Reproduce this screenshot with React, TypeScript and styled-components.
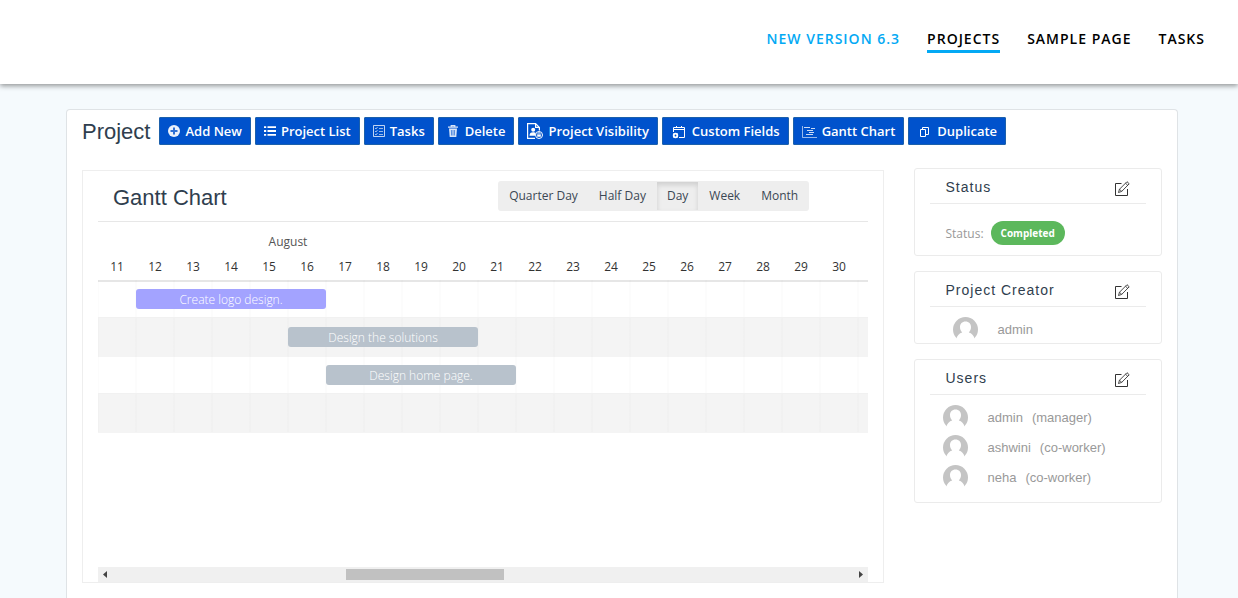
import React from 'react';
import styled, { createGlobalStyle, css } from 'styled-components';

const sans = `"Open Sans", "Noto Sans", sans-serif`;
const arial = `"Liberation Sans", Arial, sans-serif`;
const DAY_WIDTH = 38;

const GlobalStyle = createGlobalStyle`
  *, *::before, *::after { box-sizing: border-box; }
  body { margin: 0; background: #f5fafd; font-family: ${sans}; color: #2f3e4e; }
  h1, h2, h3, ul { margin: 0; padding: 0; font-weight: 400; }
  ul { list-style: none; }
  button { margin: 0; font-family: inherit; cursor: pointer; }
  svg { display: block; flex: none; }
`;

const Page = styled.div`
  display: flex;
  flex-direction: column;
  min-height: 100vh;
`;

const Header = styled.header`
  display: flex;
  justify-content: flex-end;
  align-items: center;
  height: 84px;
  padding: 0 33px 10px;
  background: #fff;
  box-shadow: 0 2px 5px rgba(0, 0, 0, 0.4);
`;

const Nav = styled.nav`
  display: flex;
  gap: 27px;
`;

const NavLink = styled.a<{ $accent?: boolean; $current?: boolean }>`
  padding-top: 6px;
  border-bottom: 3px solid ${p => (p.$current ? '#03a9f4' : 'transparent')};
  color: ${p => (p.$accent ? '#03a9f4' : '#000')};
  font-size: 14px;
  font-weight: 600;
  line-height: 22px;
  letter-spacing: 1px;
  text-decoration: none;
  text-transform: uppercase;
`;

const Main = styled.main`
  display: flex;
  flex-direction: column;
  flex: 1;
  margin: 25px 60px 0 66px;
  border: 1px solid #dfe3e6;
  border-bottom: 0;
  border-radius: 4px 4px 0 0;
  background: #fff;
`;

const Toolbar = styled.div`
  display: flex;
  align-items: center;
  gap: 4px;
  padding: 7px 15px 0;
`;

const PageTitle = styled.h1`
  margin-right: 5px;
  padding-top: 2px;
  font: 22px/26px ${arial};
`;

const ToolButton = styled.button`
  display: flex;
  align-items: center;
  gap: 5px;
  height: 28px;
  padding: 0 8px;
  border: 1px solid #1c60ab;
  border-radius: 1px;
  background: #0052cc;
  color: #fff;
  font-size: 13px;
  font-weight: 600;
  white-space: nowrap;
`;

const Columns = styled.div`
  display: grid;
  grid-template-columns: minmax(0, 3fr) minmax(0, 1fr);
  align-items: start;
  padding-top: 23px;
`;

const ChartColumn = styled.div`
  padding: 2px 16px 0 15px;
`;

const SideColumn = styled.aside`
  display: flex;
  flex-direction: column;
  gap: 15px;
  padding: 0 15px 0 14px;
`;

const ChartPanel = styled.section`
  padding: 0 15px;
  border: 1px solid #eee;
`;

const ChartHead = styled.div`
  display: grid;
  grid-template-columns: 52% auto;
  align-items: center;
  justify-content: start;
  height: 51px;
  border-bottom: 1px solid #e7e7e7;
`;

const ChartTitle = styled.h2`
  padding: 4px 0 0 15px;
  font: 22px/28px ${arial};
`;

const ViewSwitch = styled.div`
  display: flex;
  gap: 1px;
  height: 30px;
  padding: 1px;
  border-radius: 3px;
  background: #eee;
`;

const ViewButton = styled.button<{ $active?: boolean }>`
  padding: 0 10px 2px;
  border: 0;
  background: transparent;
  color: #3b4754;
  font-size: 12px;
  white-space: nowrap;
  ${p => p.$active && css`box-shadow: inset 0 3px 5px rgba(0, 0, 0, 0.13);`}
`;

const Gantt = styled.div`
  height: 345px;
  overflow: hidden;
  color: #333;
  font-size: 12px;
`;

const dayGrid = css`
  display: grid;
  grid-template-columns: repeat(21, ${DAY_WIDTH}px);
`;

const Scale = styled.div`
  ${dayGrid}
  grid-template-rows: 26px 22px;
  height: 58px;
  padding-top: 7px;
  text-align: center;
`;

const Month = styled.div`
  grid-column: 1 / span 10;
  color: #555;
  line-height: 26px;
`;

const DayLabel = styled.div`
  grid-row: 2;
  line-height: 24px;
`;

const Rows = styled.div`
  box-shadow: inset 0 2px #e6e6e6;
`;

const Row = styled.div<{ $shaded?: boolean }>`
  ${dayGrid}
  align-items: center;
  height: ${DAY_WIDTH}px;
  background-image: repeating-linear-gradient(
    to right,
    rgba(0, 0, 0, 0.01) 0 1px,
    transparent 1px 37px,
    rgba(0, 0, 0, 0.01) 37px 38px
  );
  ${p => p.$shaded && css`
    background-color: #f4f4f4;
    box-shadow: 0 -1px #f1f1f1, 0 1px #f4f4f4;
  `}
`;

const Bar = styled.div<{ $start: number; $days: number; $color: string }>`
  grid-column: ${p => p.$start} / span ${p => p.$days};
  height: 20px;
  border-radius: 3px;
  background: ${p => p.$color};
  color: #fff;
  font-weight: 300;
  line-height: 22px;
  text-align: center;
`;

const ScrollBar = styled.div`
  display: flex;
  align-items: center;
  justify-content: space-between;
  height: 15px;
  padding: 0 5px;
  background: #f0f0f0;
`;

const Track = styled.div`
  display: grid;
  grid-template-columns: 239fr 158fr 355fr;
  flex: 1;
`;

const Thumb = styled.div`
  grid-column: 2;
  height: 11px;
  background: #c1c1c1;
`;

const Card = styled.section<{ $bottom: number }>`
  padding: 0 15px ${p => p.$bottom}px;
  border: 1px solid #ebebeb;
  border-radius: 3px;
`;

const CardHead = styled.div`
  display: flex;
  align-items: center;
  justify-content: space-between;
  height: 35px;
  padding: 0 16px;
  border-bottom: 1px solid #ebebeb;
`;

const CardTitle = styled.h3`
  padding-top: 1px;
  font: 14px/20px ${arial};
  letter-spacing: 1px;
`;

const IconButton = styled.button`
  padding: 4px 0 0;
  border: 0;
  background: none;
`;

const StatusRow = styled.div`
  display: flex;
  align-items: center;
  gap: 7px;
  padding: 17px 16px 0;
  color: #999;
  font-size: 12px;
`;

const Badge = styled.span`
  padding: 0 10px;
  border-radius: 12px;
  background: #5cb85c;
  color: #fff;
  font-size: 10px;
  font-weight: 700;
  line-height: 24px;
`;

const People = styled.ul<{ $indent: number }>`
  display: grid;
  gap: 5px;
  padding: 10px 0 0 ${p => p.$indent}px;
`;

const Person = styled.li`
  display: flex;
  align-items: center;
  height: 25px;
  color: #999;
  font: 13px/25px ${arial};
  white-space: nowrap;
`;

const PersonName = styled.span`
  margin: 0 9px 0 20px;
`;

type IconProps = { w: number; h: number; children: React.ReactNode };
const Icon = ({ w, h, children }: IconProps) => (
  <svg width={w} height={h} viewBox={`0 0 ${w} ${h}`} fill="none" stroke="#fff" aria-hidden="true">
    {children}
  </svg>
);

const AddIcon = () => (
  <Icon w={12} h={12}>
    <circle cx="6" cy="6" r="6" fill="#fff" fillOpacity=".92" stroke="none" />
    <path d="M6 2.500v7M2.500 6h7" stroke="#2f70d4" strokeWidth="2" />
  </Icon>
);

const ListIcon = () => (
  <Icon w={12} h={10}>
    <path d="M0 1.200h2.200M0 5h2.200M0 8.800h2.200M3.500 1.200H12M3.500 5H12M3.500 8.800H12" strokeWidth="1.800" />
  </Icon>
);

const TasksIcon = () => (
  <Icon w={12} h={12}>
    <g strokeOpacity=".75">
      <path d="M.5.5h11v11H.5z" />
      <path d="M2 3l1 1 1.500-2M2 6l1 1 1.500-2M2 9l1 1 1.500-2M6 3.500h4M6 6.500h4M6 9.500h4" strokeWidth=".8" />
    </g>
  </Icon>
);

const TrashIcon = () => (
  <Icon w={13} h={12}>
    <path d="M1 2.200h10M4.200 2V.6h3.600V2" strokeWidth="1.200" strokeOpacity=".85" />
    <path d="M2 3.500h8l-.7 8.500H2.700z" fill="#fff" fillOpacity=".85" stroke="none" />
    <path d="M4.400 5l.2 5.500M6 5v5.500M7.600 5l-.2 5.500" stroke="#0052cc" strokeWidth=".6" />
  </Icon>
);

const VisibilityIcon = () => (
  <Icon w={16} h={16}>
    <path d="M8 15.400H.6V.6h8l3.800 3.800v3M8.600.6v3.800h3.800" strokeWidth="1.200" />
    <circle cx="6.200" cy="6.800" r="2" fill="#fff" stroke="none" />
    <path d="M2.500 12.800c0-2.600 1.200-3.600 3.600-3.600 1.400 0 2 .3 2.600 1L8 12.800z" fill="#fff" stroke="none" />
    <circle cx="12" cy="12" r="3.500" />
    <path d="M10.200 11.600h3.600v2.200h-3.600z" fill="#fff" stroke="none" />
    <path d="M11 11.600v-1a1 1 0 0 1 2 0v1" strokeWidth=".8" />
  </Icon>
);

const FieldsIcon = () => (
  <Icon w={16} h={16}>
    <path d="M2.500 9V4.500h11v10H8M2.500 6.500h11M5.500 3v2M10.500 3v2" />
    <circle cx="4.500" cy="12.500" r="1.800" strokeWidth="1.800" />
    <path d="M2.400 10.400l.8.8M5.800 13.800l.8.8M2.400 14.600l.8-.8M5.800 11.200l.8-.8" strokeWidth=".8" />
  </Icon>
);

const GanttIcon = () => (
  <Icon w={15} h={14}>
    <path d="M.5 2v11.500H15" strokeOpacity=".6" />
    <path d="M2 3.500h6M9 4.500h4M5 6.500h6M7 8.500h5M4 10.500h7" strokeOpacity=".8" />
  </Icon>
);

const CopyIcon = () => (
  <Icon w={15} h={14}>
    <path d="M3.500 5.500h5v7h-5zM5.500 5.500v-2h6v7h-3" />
  </Icon>
);

const EditIcon = () => (
  <svg width="15" height="15" viewBox="0 0 15 15" fill="none" stroke="#333" aria-hidden="true">
    <path d="M6.500 2.500h-6v12h12V8" />
    <path d="M3.500 11.500l1-3.300L12 .7l2.200 2.100-7.500 7.600zM10.500 2.200l2.200 2.100M4.500 8.200l2.200 2.200" strokeWidth=".9" />
  </svg>
);

const Avatar = () => (
  <svg width="25" height="25" viewBox="0 0 25 25" aria-hidden="true">
    <circle cx="12.500" cy="12.500" r="12.500" fill="#c4c4c4" />
    <path d="M12.500 4.500c3.400 0 5.500 2.400 5.500 5.600 0 2.300-.8 4.200-2.200 5.400 2.900.8 4.900 3 5.900 6.300V25H3.300v-3.200c1-3.300 3-5.500 5.900-6.300C7.800 14.300 7 12.400 7 10.100c0-3.200 2.100-5.600 5.500-5.600z" fill="#fff" />
  </svg>
);

const tools = [
  { label: 'Add New', icon: <AddIcon /> },
  { label: 'Project List', icon: <ListIcon /> },
  { label: 'Tasks', icon: <TasksIcon /> },
  { label: 'Delete', icon: <TrashIcon /> },
  { label: 'Project Visibility', icon: <VisibilityIcon /> },
  { label: 'Custom Fields', icon: <FieldsIcon /> },
  { label: 'Gantt Chart', icon: <GanttIcon /> },
  { label: 'Duplicate', icon: <CopyIcon /> },
];

const views = ['Quarter Day', 'Half Day', 'Day', 'Week', 'Month'];
const days = Array.from({ length: 20 }, (_, i) => 11 + i);

const tasks = [
  { name: 'Create logo design.', start: 2, days: 5, color: '#a3a3ff' },
  { name: 'Design the solutions', start: 6, days: 5, color: '#b8c2cc' },
  { name: 'Design home page.', start: 7, days: 5, color: '#b8c2cc' },
  null,
];

const users = [
  { name: 'admin', role: '(manager)' },
  { name: 'ashwini', role: '(co-worker)' },
  { name: 'neha', role: '(co-worker)' },
];

const SideCard = ({ title, bottom, children }: { title: string; bottom: number; children: React.ReactNode }) => (
  <Card $bottom={bottom}>
    <CardHead>
      <CardTitle>{title}</CardTitle>
      <IconButton type="button" aria-label={`Edit ${title}`}><EditIcon /></IconButton>
    </CardHead>
    {children}
  </Card>
);

export default function App() {
  const [view, setView] = React.useState('Day');
  return (
    <Page>
      <GlobalStyle />
      <Header>
        <Nav>
          <NavLink href="#new" $accent>New Version 6.3</NavLink>
          <NavLink href="#projects" $current>Projects</NavLink>
          <NavLink href="#sample">Sample Page</NavLink>
          <NavLink href="#tasks">Tasks</NavLink>
        </Nav>
      </Header>
      <Main>
        <Toolbar>
          <PageTitle>Project</PageTitle>
          {tools.map(t => (
            <ToolButton type="button" key={t.label}>{t.icon}{t.label}</ToolButton>
          ))}
        </Toolbar>
        <Columns>
          <ChartColumn>
            <ChartPanel>
              <ChartHead>
                <ChartTitle>Gantt Chart</ChartTitle>
                <ViewSwitch>
                  {views.map(v => (
                    <ViewButton type="button" key={v} $active={v === view} aria-pressed={v === view} onClick={() => setView(v)}>
                      {v}
                    </ViewButton>
                  ))}
                </ViewSwitch>
              </ChartHead>
              <Gantt>
                <Scale>
                  <Month>August</Month>
                  {days.map(d => <DayLabel key={d}>{d}</DayLabel>)}
                </Scale>
                <Rows>
                  {tasks.map((t, i) => (
                    <Row key={i} $shaded={i % 2 === 1}>
                      {t && <Bar $start={t.start} $days={t.days} $color={t.color}>{t.name}</Bar>}
                    </Row>
                  ))}
                </Rows>
              </Gantt>
              <ScrollBar>
                <svg width="4" height="7" viewBox="0 0 4 7" aria-hidden="true"><path d="M4 0v7L0 3.500z" fill="#444" /></svg>
                <Track><Thumb /></Track>
                <svg width="4" height="7" viewBox="0 0 4 7" aria-hidden="true"><path d="M0 0v7l4-3.500z" fill="#444" /></svg>
              </ScrollBar>
            </ChartPanel>
          </ChartColumn>
          <SideColumn>
            <SideCard title="Status" bottom={10}>
              <StatusRow>Status: <Badge>Completed</Badge></StatusRow>
            </SideCard>
            <SideCard title="Project Creator" bottom={1}>
              <People $indent={23}>
                <Person><Avatar /><PersonName>admin</PersonName></Person>
              </People>
            </SideCard>
            <SideCard title="Users" bottom={12}>
              <People $indent={13}>
                {users.map(u => (
                  <Person key={u.name}><Avatar /><PersonName>{u.name}</PersonName>{u.role}</Person>
                ))}
              </People>
            </SideCard>
          </SideColumn>
        </Columns>
      </Main>
    </Page>
  );
}
